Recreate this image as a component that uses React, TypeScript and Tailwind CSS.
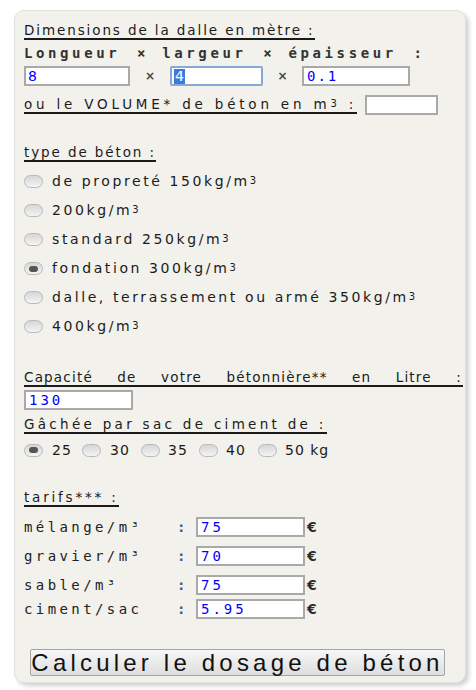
import React from 'react'

const sans = "font-['DejaVu_Sans',Verdana,sans-serif]"
const mono = "font-['DejaVu_Sans_Mono',monospace]"

function Radio({ checked = false }: { checked?: boolean }) {
  return (
    <span className="inline-flex items-center justify-center w-[19px] h-[13px] shrink-0 rounded-full border border-[#b9b9b9] bg-gradient-to-b from-[#d6d6d6] to-[#f4f4f4]">
      {checked && <span className="block w-[9px] h-[6px] rounded-full bg-[#555]" />}
    </span>
  )
}

function Title({ children }: { children: React.ReactNode }) {
  return (
    <div className="leading-[15px]">
      <span className="inline-block border-b-2 border-[#1b1b1b] leading-[15px]">{children}</span>
    </div>
  )
}

function Sup() {
  return <sup className="text-[10px] relative -top-[2px]">3</sup>
}

const types = [
  { label: 'de propreté 150kg/m', checked: false },
  { label: '200kg/m', checked: false },
  { label: 'standard 250kg/m', checked: false },
  { label: 'fondation 300kg/m', checked: true },
  { label: 'dalle, terrassement ou armé 350kg/m', checked: false },
  { label: '400kg/m', checked: false },
]

const tarifs = [
  { label: 'mélange/m³', value: '75' },
  { label: 'gravier/m³', value: '70' },
  { label: 'sable/m³', value: '75' },
  { label: 'ciment/sac', value: '5.95' },
]

export default function App() {
  return (
    <div className="min-h-[690px] bg-white pt-[10px] pl-[14px]">
      <div
        className={`w-[452px] h-[673px] rounded-[10px] border border-[#e2e1dc] bg-[#f2f1ec] shadow-[3px_3px_4px_rgba(0,0,0,0.18)] pl-[9px] pr-[2px] pt-[12px] text-[13.5px] text-[#1b1b1b] ${sans}`}
      >
        {/* dimensions */}
        <div className="tracking-[1.9px]">
          <Title>Dimensions de la dalle en mètre :</Title>
        </div>
        <div className={`mt-[5px] flex justify-between w-[398px] text-[14px] font-bold text-[#333] leading-[16px] ${mono}`}>
          <span className="tracking-[3.6px]">Longueur</span>
          <span>×</span>
          <span className="tracking-[3.6px]">largeur</span>
          <span>×</span>
          <span className="tracking-[3.6px]">épaisseur</span>
          <span>:</span>
        </div>
        <div className="mt-[5px] flex items-center h-[20px]">
          <div className="w-[106px] h-[20px] border-2 border-[#a9a9a9] bg-white text-[#0000ff] pl-[2px] leading-[16px] text-[14px]">8</div>
          <span className="w-[40px] text-center text-[12px] font-bold text-[#444]">×</span>
          <div className="w-[93px] h-[20px] border-2 border-[#86a9d6] rounded-[2px] bg-white pl-[2px] flex items-center">
            <span className="bg-[#3b7be0] text-white leading-[15px] text-[14px] px-[1px]">4</span>
          </div>
          <span className="w-[39px] text-center text-[12px] font-bold text-[#444]">×</span>
          <div className={`w-[108px] h-[20px] border-2 border-[#a9a9a9] bg-white text-[#0000ff] pl-[3px] leading-[16px] text-[14px] tracking-[2px] ${mono}`}>0.1</div>
        </div>
        <div className="mt-[9px] flex items-center">
          <span className="inline-block border-b-2 border-[#1b1b1b] leading-[15px] tracking-[3.8px]">
            ou le VOLUME* de béton en m<Sup /> :
          </span>
          <div className="ml-[8px] w-[73px] h-[20px] border-2 border-[#a9a9a9] bg-white" />
        </div>

        {/* type de béton */}
        <div className="mt-[30px] tracking-[1.9px]">
          <Title>type de béton :</Title>
        </div>
        <div className="mt-[5px] flex flex-col">
          {types.map((t) => (
            <div key={t.label} className="h-[29px] flex items-center gap-[9px] tracking-[2.6px] text-[14px]">
              <Radio checked={t.checked} />
              <span className="leading-[15px]">
                {t.label}
                <Sup />
              </span>
            </div>
          ))}
        </div>

        {/* bétonnière */}
        <div className="mt-[29px] tracking-[1.2px]">
          <div className="border-b-2 border-[#1b1b1b] leading-[15px] flex justify-between pr-[1px]">
            <span>Capacité</span>
            <span>de</span>
            <span>votre</span>
            <span>bétonnière**</span>
            <span>en</span>
            <span>Litre</span>
            <span>:</span>
          </div>
        </div>
        <div className={`mt-[3px] w-[109px] h-[20px] border-2 border-[#a9a9a9] bg-white text-[#0000ff] pl-[3px] leading-[16px] text-[14px] tracking-[3px] ${mono}`}>130</div>
        <div className="mt-[7px] tracking-[3.3px]">
          <Title>Gâchée par sac de ciment de :</Title>
        </div>
        <div className="mt-[8px] flex items-center h-[16px] text-[14px] tracking-[1px]">
          <Radio checked />
          <span className="ml-[9px] w-[30px]">25</span>
          <Radio />
          <span className="ml-[9px] w-[31px]">30</span>
          <Radio />
          <span className="ml-[8px] w-[31px]">35</span>
          <Radio />
          <span className="ml-[8px] w-[32px]">40</span>
          <Radio />
          <span className="ml-[8px]">50 kg</span>
        </div>

        {/* tarifs */}
        <div className="mt-[32px] tracking-[2.8px]">
          <Title>tarifs*** :</Title>
        </div>
        <div className={`mt-[10px] flex flex-col text-[14px] font-bold text-[#2a2a2a] ${mono}`}>
          {tarifs.map((t, i) => (
            <div key={t.label} className={`flex items-center h-[20px] ${i === 3 ? 'mt-[4px]' : i > 0 ? 'mt-[9px]' : ''}`}>
              <span className="w-[153px] tracking-[3.4px] font-normal text-[#222]">{t.label}</span>
              <span className="w-[19px] text-[#3a5a8a]">:</span>
              <div className="w-[109px] h-[20px] border-2 border-[#a9a9a9] bg-white text-[#0000ff] pl-[3px] leading-[16px] tracking-[3px] font-normal">
                {t.value}
              </div>
              <span className={`ml-[2px] ${sans}`}>€</span>
            </div>
          ))}
        </div>

        {/* bouton */}
        <button
          className="mt-[30px] ml-[6px] w-[415px] h-[27px] border border-[#a4a4a4] rounded-[2px] bg-gradient-to-b from-[#f7f7f7] to-[#dedede] text-[24px] leading-[24px] text-[#111] tracking-[4.2px] font-['Liberation_Sans',Arial,sans-serif]"
        >
          Calculer le dosage de béton
        </button>
      </div>
    </div>
  )
}
